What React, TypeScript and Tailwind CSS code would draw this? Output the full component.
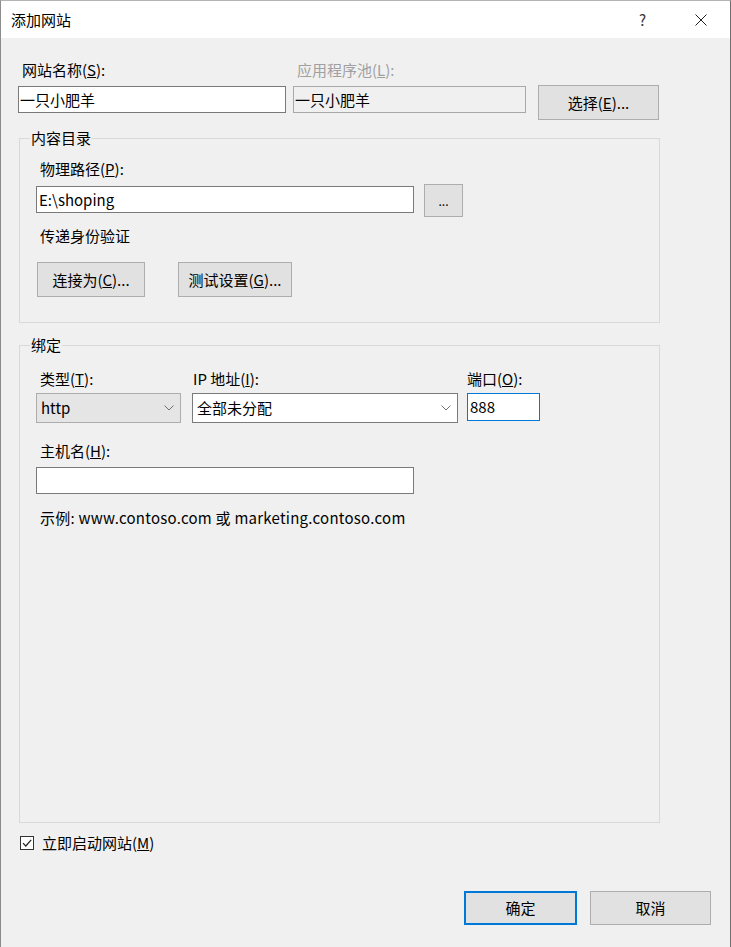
import React from 'react';

const font = "font-['Noto_Sans_CJK_SC','Noto_Sans',sans-serif]";

const Chevron: React.FC = () => (
  <svg width="10" height="6" viewBox="0 0 10 6" className="shrink-0">
    <path d="M0.5 0.5 L5 5 L9.5 0.5" fill="none" stroke="#707070" strokeWidth="1" />
  </svg>
);

const Btn: React.FC<{ w: string; h?: string; primary?: boolean; children: React.ReactNode }> = ({
  w,
  h = 'h-[35px]',
  primary,
  children,
}) => (
  <div
    className={`${w} ${h} flex items-center justify-center bg-[#e1e1e1] text-[15px] leading-[20px] text-black ${
      primary ? 'border-2 border-[#0078d7]' : 'border border-[#adadad]'
    }`}
  >
    {children}
  </div>
);

const App: React.FC = () => {
  return (
    <div
      className={`${font} w-[731px] h-[947px] bg-[#f0f0f0] border-t border-t-[#b4b4b4] border-l border-l-[#8c8c8c] border-r border-r-[#6e6e6e] text-black text-[15px] leading-[20px] overflow-hidden flex flex-col`}
    >
      {/* Title bar */}
      <div className="h-[37px] bg-white flex items-center shrink-0">
        <span className="ml-[10px] text-[15px]">添加网站</span>
        <span className="ml-auto mr-[49px] text-[15px] text-[#333]">?</span>
        <svg width="12" height="12" viewBox="0 0 12 12" className="mr-[23px]">
          <path d="M0.5 0.5 L11.5 11.5 M11.5 0.5 L0.5 11.5" stroke="#222" strokeWidth="1" />
        </svg>
      </div>

      <div className="pl-[17px] pt-[22px] flex flex-col">
        {/* Site name / app pool */}
        <div className="flex items-start">
          <div className="flex flex-col w-[268px]">
            <span className="pl-[4px]">
              网站名称(<u>S</u>):
            </span>
            <div className="mt-[6px] h-[27px] bg-white border border-[#7a7a7a] flex items-center pl-[1px]">
              一只小肥羊
            </div>
          </div>
          <div className="flex flex-col w-[233px] ml-[7px]">
            <span className="pl-[4px] text-[#a0a0a0]">
              应用程序池(<u>L</u>):
            </span>
            <div className="mt-[6px] h-[27px] bg-[#f0f0f0] border border-[#a8a8a8] flex items-center pl-[1px]">
              一只小肥羊
            </div>
          </div>
          <div className="ml-[12px] pt-[25px]">
            <Btn w="w-[121px]">
              选择(<u>E</u>)...
            </Btn>
          </div>
        </div>

        {/* Content directory */}
        <fieldset className="ml-[1px] mt-[8px] w-[641px] border border-[#d9d9d9] px-0">
          <legend className="ml-[10px] px-[1px] leading-[20px]">内容目录</legend>
          <div className="pl-[16px] pt-[11px] pb-[25px] flex flex-col">
            <span className="pl-[4px]">
              物理路径(<u>P</u>):
            </span>
            <div className="mt-[5px] flex items-start">
              <div className="mt-[2px] w-[378px] h-[27px] bg-white border border-[#7a7a7a] flex items-center pl-[2px]">
                E:\shoping
              </div>
              <div className="ml-[10px]">
                <Btn w="w-[39px]" h="h-[33px]">
                  <span className="text-[12px]">...</span>
                </Btn>
              </div>
            </div>
            <span className="pl-[4px] mt-[9px]">传递身份验证</span>
            <div className="mt-[16px] flex pl-[1px] gap-[33px]">
              <Btn w="w-[108px]">
                连接为(<u>C</u>)...
              </Btn>
              <Btn w="w-[114px]">
                测试设置(<u>G</u>)...
              </Btn>
            </div>
          </div>
        </fieldset>

        {/* Binding */}
        <fieldset className="ml-[1px] mt-[12px] w-[641px] h-[488px] border border-[#d9d9d9] px-0">
          <legend className="ml-[10px] px-[1px] leading-[20px]">绑定</legend>
          <div className="pl-[16px] pt-[14px] flex flex-col">
            <div className="flex items-start">
              <div className="flex flex-col w-[145px]">
                <span className="pl-[4px]">
                  类型(<u>T</u>):
                </span>
                <div className="mt-[4px] h-[30px] bg-[#e5e5e5] border border-[#adadad] flex items-center pl-[4px] pr-[6px]">
                  <span className="flex-1">http</span>
                  <Chevron />
                </div>
              </div>
              <div className="flex flex-col w-[266px] ml-[11px]">
                <span className="pl-[1px]">
                  IP 地址(<u>I</u>):
                </span>
                <div className="mt-[4px] h-[30px] bg-white border border-[#7a7a7a] flex items-center pl-[4px] pr-[6px]">
                  <span className="flex-1">全部未分配</span>
                  <Chevron />
                </div>
              </div>
              <div className="flex flex-col w-[73px] ml-[9px]">
                <span>
                  端口(<u>O</u>):
                </span>
                <div className="mt-[4px] h-[28px] bg-white border border-[#0078d7] flex items-center pl-[2px]">
                  888
                </div>
              </div>
            </div>
            <span className="pl-[4px] mt-[18px]">
              主机名(<u>H</u>):
            </span>
            <div className="mt-[6px] w-[378px] h-[27px] bg-white border border-[#7a7a7a]" />
            <span className="pl-[4px] mt-[14px] tracking-[0.25px]">
              示例: www.contoso.com 或 marketing.contoso.com
            </span>
          </div>
        </fieldset>

        {/* Start immediately */}
        <div className="mt-[10px] flex items-center ml-[2px]">
          <div className="w-[14px] h-[14px] border border-[#333] bg-white flex items-center justify-center">
            <svg width="12" height="12" viewBox="0 0 12 12">
              <path d="M2 6.2 L4.8 9 L10.2 2.8" fill="none" stroke="#222" strokeWidth="1.2" />
            </svg>
          </div>
          <span className="ml-[8px]">
            立即启动网站(<u>M</u>)
          </span>
        </div>

        {/* Dialog buttons */}
        <div className="mt-[38px] flex justify-end pr-[19px] gap-[13px]">
          <Btn w="w-[113px]" h="h-[34px]" primary>
            确定
          </Btn>
          <Btn w="w-[121px]" h="h-[34px]">
            取消
          </Btn>
        </div>
      </div>
    </div>
  );
};

export default App;
